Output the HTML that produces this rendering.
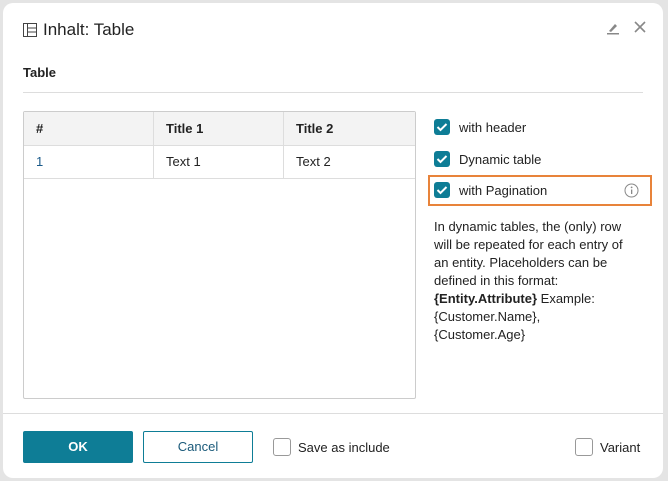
<!DOCTYPE html><html><head><style>
body{margin:0;width:668px;height:481px;background:#e4e4e4;font-family:"Liberation Sans",sans-serif;color:#222;position:relative;overflow:hidden}
.dlg{position:absolute;left:3px;top:3px;width:660px;height:475px;background:#fff;border-radius:10px}
.a{position:absolute}
.cb{position:absolute;width:16px;height:16px;border-radius:3px;background:#0e7d96}
.cb svg{position:absolute;left:2px;top:3px}
.ec{position:absolute;width:16px;height:16px;border:1px solid #999;border-radius:3px;background:#fff}
.t{font-size:13px}
</style></head><body>
<div class="dlg"></div>
<svg class="a" style="left:23px;top:23px" width="14" height="14" viewBox="0 0 14 14"><rect x="0.5" y="0.5" width="13" height="13" fill="none" stroke="#444"/><line x1="4.5" y1="0.5" x2="4.5" y2="13.5" stroke="#444"/><line x1="4.5" y1="5" x2="13.5" y2="5" stroke="#444"/><line x1="4.5" y1="9" x2="13.5" y2="9" stroke="#444"/></svg>
<div class="a" style="left:43px;top:20px;font-size:17px">Inhalt: Table</div>
<svg class="a" style="left:606px;top:21px" width="14" height="14" viewBox="0 0 14 14"><path d="M3 10 L9 3 L11 5 L5 11 Z" fill="#888"/><rect x="1" y="12" width="12" height="1.5" fill="#888"/></svg>
<svg class="a" style="left:634px;top:21px" width="12" height="12" viewBox="0 0 12 12"><path d="M1 1L11 11M11 1L1 11" stroke="#888" stroke-width="1.6"/></svg>
<div class="a t" style="left:23px;top:65px;font-weight:bold">Table</div>
<div class="a" style="left:23px;top:92px;width:620px;height:1px;background:#ddd"></div>
<div class="a" style="left:23px;top:111px;width:391px;height:286px;border:1px solid #ccc;border-radius:2px"></div>
<div class="a" style="left:24px;top:112px;width:391px;height:33px;background:#f3f3f3;border-bottom:1px solid #ddd"></div>
<div class="a" style="left:24px;top:178px;width:391px;height:1px;background:#ddd"></div>
<div class="a" style="left:153px;top:112px;width:1px;height:66px;background:#ddd"></div>
<div class="a" style="left:283px;top:112px;width:1px;height:66px;background:#ddd"></div>
<div class="a t" style="left:36px;top:121px;font-weight:bold">#</div>
<div class="a t" style="left:166px;top:121px;font-weight:bold">Title 1</div>
<div class="a t" style="left:296px;top:121px;font-weight:bold">Title 2</div>
<div class="a t" style="left:36px;top:154px;color:#1a5a8a">1</div>
<div class="a t" style="left:166px;top:154px">Text 1</div>
<div class="a t" style="left:296px;top:154px">Text 2</div>
<div class="cb" style="left:434px;top:119px"><svg width="12" height="10" viewBox="0 0 12 10"><path d="M1.5 5 L4.5 8 L10.5 2" stroke="#fff" stroke-width="2" fill="none"/></svg></div>
<div class="a t" style="left:459px;top:120px">with header</div>
<div class="cb" style="left:434px;top:151px"><svg width="12" height="10" viewBox="0 0 12 10"><path d="M1.5 5 L4.5 8 L10.5 2" stroke="#fff" stroke-width="2" fill="none"/></svg></div>
<div class="a t" style="left:459px;top:152px">Dynamic table</div>
<div class="a" style="left:428px;top:175px;width:224px;height:31px;border:2px solid #e8833a;box-sizing:border-box"></div>
<div class="cb" style="left:434px;top:182px"><svg width="12" height="10" viewBox="0 0 12 10"><path d="M1.5 5 L4.5 8 L10.5 2" stroke="#fff" stroke-width="2" fill="none"/></svg></div>
<div class="a t" style="left:459px;top:183px">with Pagination</div>
<svg class="a" style="left:624px;top:183px" width="15" height="15" viewBox="0 0 15 15"><circle cx="7.5" cy="7.5" r="6.5" fill="none" stroke="#888"/><rect x="7" y="6.5" width="1.3" height="4.5" fill="#888"/><circle cx="7.6" cy="4.4" r="0.9" fill="#888"/></svg>
<div class="a t" style="left:434px;top:218px;width:230px;line-height:18px;white-space:nowrap">In dynamic tables, the (only) row<br>will be repeated for each entry of<br>an entity. Placeholders can be<br>defined in this format:<br><b>{Entity.Attribute}</b> Example:<br>{Customer.Name},<br>{Customer.Age}</div>
<div class="a" style="left:3px;top:413px;width:660px;height:1px;background:#ddd"></div>
<div class="a" style="left:23px;top:431px;width:110px;height:32px;background:#0e7d96;border-radius:2px;color:#fff;font-weight:bold;font-size:13px;text-align:center;line-height:32px">OK</div>
<div class="a" style="left:143px;top:431px;width:108px;height:30px;border:1px solid #0e7d96;border-radius:2px;color:#1a5a7a;font-size:13px;text-align:center;line-height:30px">Cancel</div>
<div class="ec" style="left:273px;top:438px"></div>
<div class="a t" style="left:298px;top:440px">Save as include</div>
<div class="ec" style="left:575px;top:438px"></div>
<div class="a t" style="left:600px;top:440px">Variant</div>
</body></html>
